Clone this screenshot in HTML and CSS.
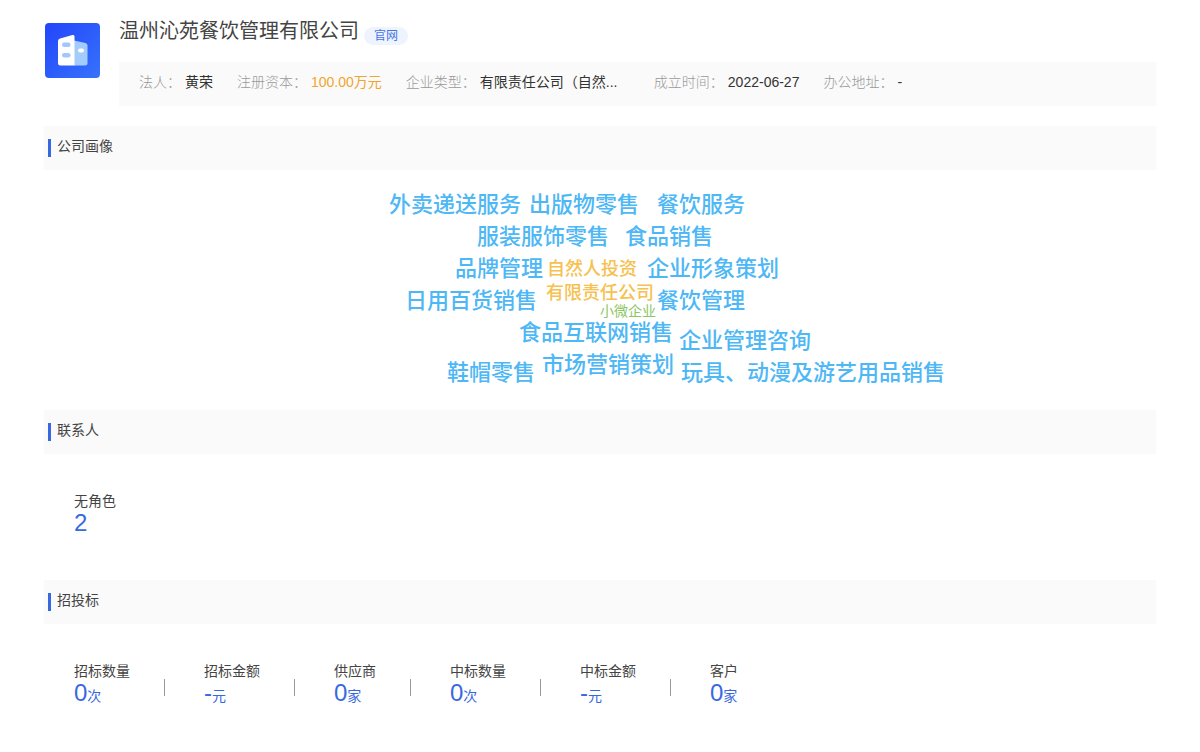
FILE: index.html
```html
<!DOCTYPE html>
<html lang="zh-CN">
<head>
<meta charset="utf-8">
<title>温州沁苑餐饮管理有限公司</title>
<link rel="stylesheet" href="styles.css">
</head>
<body>
<main class="page">
  <header class="company">
    <svg class="company-logo" viewBox="0 0 55 55" aria-hidden="true">
      <defs>
        <linearGradient id="logo-bg" x1="0" y1="0" x2="1" y2="1">
          <stop offset="0" stop-color="#2345fb"/>
          <stop offset="1" stop-color="#3673fb"/>
        </linearGradient>
      </defs>
      <rect width="55" height="55" rx="4" fill="url(#logo-bg)"/>
      <path d="M29 17.500 L40.500 20 Q42.500 20.500 42.500 22.500 V40 Q42.500 42.500 40 42.500 H29 Z" fill="#a3cbfb"/>
      <path d="M15 15.500 L27.500 12 Q29.500 11.500 29.500 13.500 V42.500 H15.500 Q13 42.500 13 40 V18 Q13 16 15 15.500 Z" fill="#fff"/>
      <rect x="17" y="19.500" width="8.500" height="4.500" rx="2.200" fill="#a3c6fb"/>
      <rect x="17" y="30" width="8.500" height="4.500" rx="2.200" fill="#a3c6fb"/>
      <rect x="33" y="25.500" width="6" height="4" rx="2" fill="#fff"/>
    </svg>
    <div class="company-main">
      <div class="company-heading">
        <h1 class="company-name">温州沁苑餐饮管理有限公司</h1>
        <a class="site-tag" href="#">官网</a>
      </div>
      <dl class="facts">
        <div class="fact"><dt>法人：</dt><dd>黄荣</dd></div>
        <div class="fact"><dt>注册资本：</dt><dd class="capital">100.00万元</dd></div>
        <div class="fact"><dt>企业类型：</dt><dd class="company-type">有限责任公司（自然...</dd></div>
        <div class="fact"><dt>成立时间：</dt><dd>2022-06-27</dd></div>
        <div class="fact"><dt>办公地址：</dt><dd>-</dd></div>
      </dl>
    </div>
  </header>

  <section>
    <h2 class="section-title">公司画像</h2>
    <div class="cloud">
      <span class="word w1">外卖递送服务</span>
      <span class="word w2">出版物零售</span>
      <span class="word w3">餐饮服务</span>
      <span class="word w4">服装服饰零售</span>
      <span class="word w5">食品销售</span>
      <span class="word w6">品牌管理</span>
      <span class="word medium w7">自然人投资</span>
      <span class="word w8">企业形象策划</span>
      <span class="word w9">日用百货销售</span>
      <span class="word medium w10">有限责任公司</span>
      <span class="word w11">餐饮管理</span>
      <span class="word small w12">小微企业</span>
      <span class="word w13">食品互联网销售</span>
      <span class="word w14">企业管理咨询</span>
      <span class="word w15">鞋帽零售</span>
      <span class="word w16">市场营销策划</span>
      <span class="word w17">玩具、动漫及游艺用品销售</span>
    </div>
  </section>

  <section>
    <h2 class="section-title">联系人</h2>
    <dl class="stats">
      <div class="stat"><dt>无角色</dt><dd>2</dd></div>
    </dl>
  </section>

  <section>
    <h2 class="section-title">招投标</h2>
    <dl class="stats">
      <div class="stat"><dt>招标数量</dt><dd>0<small>次</small></dd></div>
      <div class="stat"><dt>招标金额</dt><dd>-<small>元</small></dd></div>
      <div class="stat"><dt>供应商</dt><dd>0<small>家</small></dd></div>
      <div class="stat"><dt>中标数量</dt><dd>0<small>次</small></dd></div>
      <div class="stat"><dt>中标金额</dt><dd>-<small>元</small></dd></div>
      <div class="stat"><dt>客户</dt><dd>0<small>家</small></dd></div>
    </dl>
  </section>
</main>
</body>
</html>
```
FILE: styles.css
```css
* { box-sizing: border-box; }

body {
  margin: 0;
  background: #fff;
  color: #333;
  font: 14px/20px "Liberation Sans", "Noto Sans CJK SC", sans-serif;
}

h1, h2, dl, dd { margin: 0; font-weight: 400; }

.page { padding: 17px 44px 0; }

/* Company header */
.company { display: flex; gap: 19px; margin-bottom: 20px; }
.company-logo { flex: none; width: 55px; height: 55px; margin: 6px 0 0 1px; }
.company-main { flex: 1; min-width: 0; }
.company-heading { display: flex; align-items: flex-end; gap: 5px; margin-bottom: 17px; }
.company-name { color: #444; font-size: 20px; line-height: 28px; }
.site-tag {
  padding: 0 10px;
  border-radius: 9px;
  background: #eef3fd;
  color: #4474e6;
  font-size: 12px;
  line-height: 18px;
  text-decoration: none;
}
.facts {
  display: flex;
  gap: 24px;
  padding: 10px 20px 14px;
  background: #fafafa;
  white-space: nowrap;
}
.fact { display: flex; gap: 4px; }
.fact dt { color: #999; font-weight: 300; }
.capital { color: #f0a52e; }
.company-type { min-width: 150px; }

/* Section bars */
.section-title {
  display: flex;
  align-items: center;
  gap: 6px;
  height: 44px;
  padding: 0 4px 4px;
  background: #fafafa;
  color: #444;
  font-size: 14px;
}
.section-title::before {
  content: "";
  width: 3px;
  height: 18px;
  margin-top: 4px;
  background: #3768e2;
}

/* Word cloud: words sit freely around the canvas centre */
.cloud { position: relative; width: 600px; height: 240px; margin: 0 auto; }
.word {
  position: absolute;
  color: #4eb7f5;
  font-size: 22px;
  line-height: 32px;
  font-weight: 500;
  white-space: nowrap;
}
.word.medium { color: #f6c14f; font-size: 18px; line-height: 24px; }
.word.small { color: #8cc665; font-size: 14px; line-height: 20px; font-weight: 400; }
.w1 { left: 89px; top: 19px; }
.w2 { left: 229px; top: 19px; }
.w3 { left: 357px; top: 19px; }
.w4 { left: 177px; top: 51px; }
.w5 { left: 325px; top: 51px; }
.w6 { left: 155px; top: 83px; }
.w7 { left: 247px; top: 87px; }
.w8 { left: 347px; top: 83px; }
.w9 { left: 105px; top: 115px; }
.w10 { left: 246px; top: 111px; }
.w11 { left: 357px; top: 115px; }
.w12 { left: 300px; top: 131px; }
.w13 { left: 219px; top: 147px; }
.w14 { left: 379px; top: 155px; }
.w15 { left: 147px; top: 187px; }
.w16 { left: 242px; top: 179px; }
.w17 { left: 381px; top: 187px; }

/* Figures */
.stats { display: flex; height: 126px; padding: 37px 30px 0; }
.stat { position: relative; padding-right: 74px; }
.stat:not(:last-child)::after {
  content: "";
  position: absolute;
  top: 18px;
  right: 39px;
  width: 1px;
  height: 17px;
  background: #999;
}
.stat dt { color: #444; }
.stat dd { color: #3768e2; font-size: 24px; line-height: 24px; }
.stat small { font-size: 14px; }
```
